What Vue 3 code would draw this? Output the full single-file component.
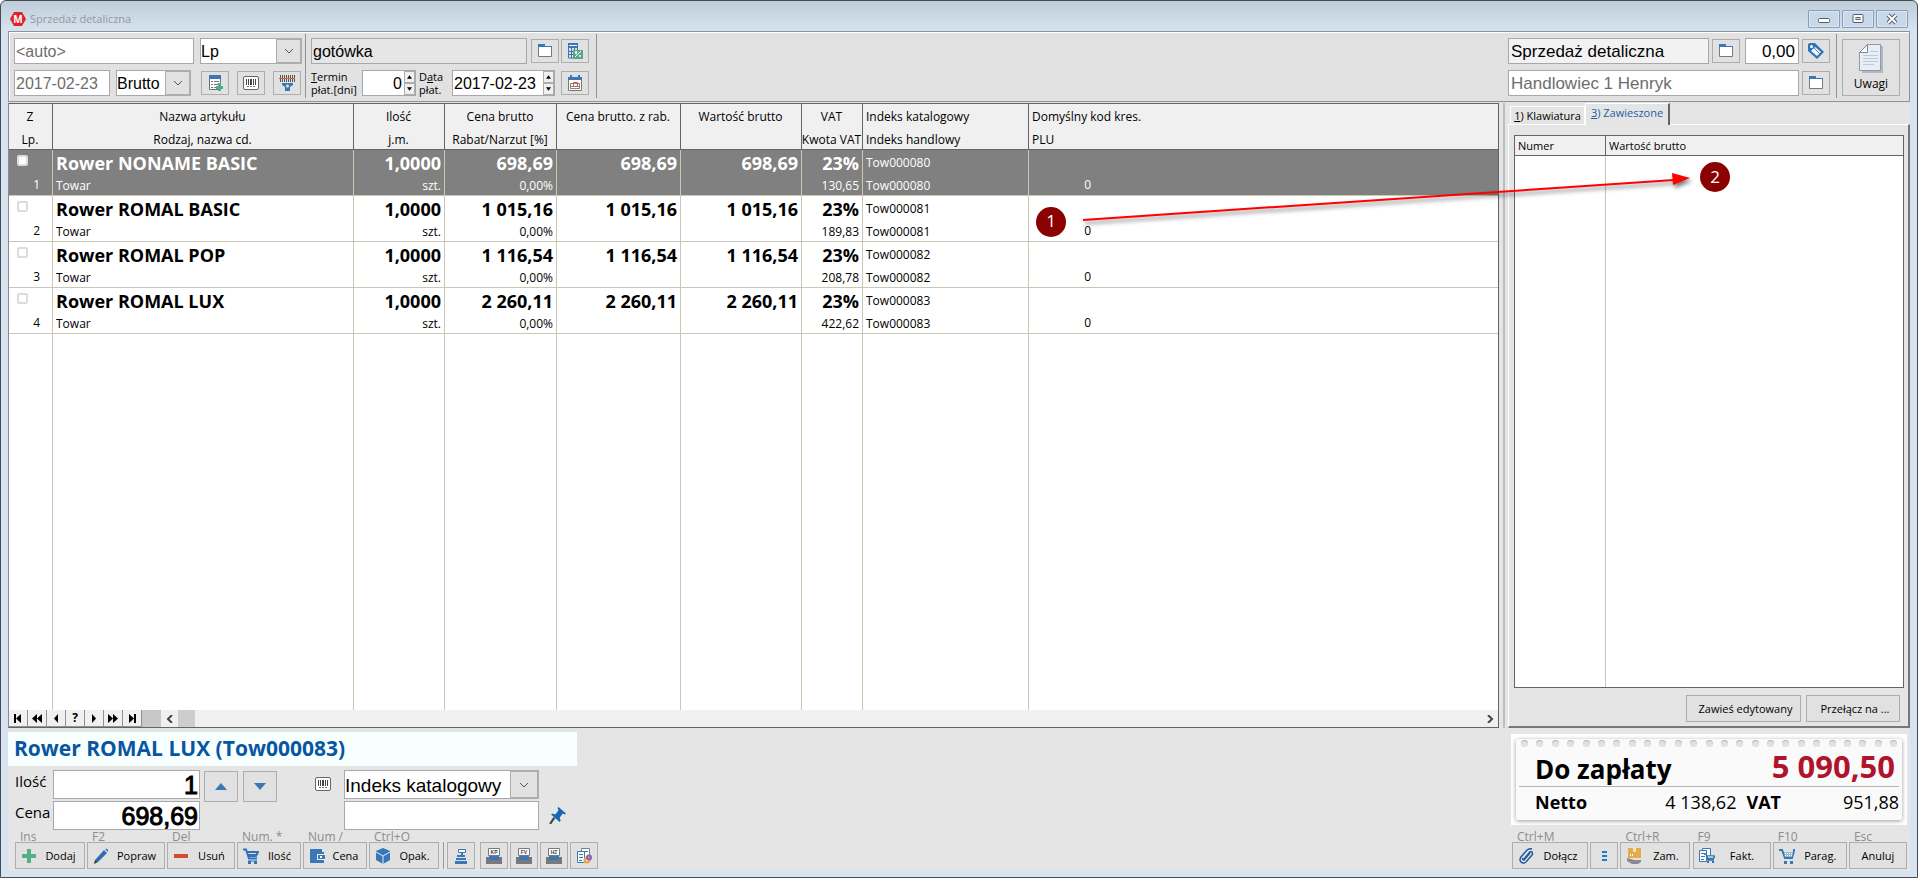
<script setup>
import { ref } from 'vue'

const columns = [
  { key: 'lp', top: 'Z', bottom: 'Lp.', align: 'mid' },
  { key: 'name', top: 'Nazwa artykułu', bottom: 'Rodzaj, nazwa cd.', align: 'mid' },
  { key: 'qty', top: 'Ilość', bottom: 'j.m.', align: 'mid' },
  { key: 'price', top: 'Cena brutto', bottom: 'Rabat/Narzut [%]', align: 'mid' },
  { key: 'disc', top: 'Cena brutto. z rab.', bottom: '', align: 'mid' },
  { key: 'value', top: 'Wartość brutto', bottom: '', align: 'mid' },
  { key: 'vat', top: 'VAT', bottom: 'Kwota VAT', align: 'mid' },
  { key: 'index', top: 'Indeks katalogowy', bottom: 'Indeks handlowy', align: 'start' },
  { key: 'code', top: 'Domyślny kod kres.', bottom: 'PLU', align: 'start' }
]

const rows = [
  { no: 1, name: 'Rower NONAME BASIC', price: '698,69', vat: '130,65', index: 'Tow000080' },
  { no: 2, name: 'Rower ROMAL BASIC', price: '1 015,16', vat: '189,83', index: 'Tow000081' },
  { no: 3, name: 'Rower ROMAL POP', price: '1 116,54', vat: '208,78', index: 'Tow000082' },
  { no: 4, name: 'Rower ROMAL LUX', price: '2 260,11', vat: '422,62', index: 'Tow000083' }
]

const selected = ref(1)
const docNumber = ref('<auto>')

const navGlyphs = [
  { name: 'Pierwszy', d: 'M3 3h2v9H3z M10 3v9L5 7.5z' },
  { name: 'Poprzednia strona', d: 'M7 3v9L2 7.5z M12 3v9L7 7.5z' },
  { name: 'Poprzedni', d: 'M9 3v9L5 7.5z' },
  { name: 'Szukaj', text: '?' },
  { name: 'Następny', d: 'M5 3v9l4-4.5z' },
  { name: 'Następna strona', d: 'M2 3v9l5-4.5z M7 3v9l5-4.5z' },
  { name: 'Ostatni', d: 'M4 3v9l5-4.5z M9 3h2v9H9z' }
]

const editActions = [
  { key: 'Ins', label: 'Dodaj', icon: 'plus', cls: 'w70' },
  { key: 'F2', label: 'Popraw', icon: 'pencil', cls: 'w78' },
  { key: 'Del', label: 'Usuń', icon: 'minus', cls: 'w68' },
  { key: 'Num. *', label: 'Ilość', icon: 'cart', cls: 'w64' },
  { key: 'Num /', label: 'Cena', icon: 'wallet', cls: 'w64' },
  { key: 'Ctrl+O', label: 'Opak.', icon: 'box', cls: 'w70' }
]

const printers = [
  { code: 'KP' },
  { code: 'FV' },
  { code: 'HZ' }
]

const docActions = [
  { key: 'Ctrl+M', label: 'Dołącz', icon: 'clip', cls: 'w76' },
  { key: '', label: '', icon: 'dots', cls: 'w28' },
  { key: 'Ctrl+R', label: 'Zam.', icon: 'parcel', cls: 'w70' },
  { key: 'F9', label: 'Fakt.', icon: 'invoice', cls: 'w78' },
  { key: 'F10', label: 'Parag.', icon: 'basket', cls: 'w74' },
  { key: 'Esc', label: 'Anuluj', icon: '', cls: 'w58' }
]
</script>

<template>
  <div class="window">
    <svg class="sprites" aria-hidden="true">
      <symbol id="i-folder" viewBox="0 0 16 16"><path fill="#fff" stroke="#77797c" d="M1.500 3.500h13v10h-13z" /><path fill="#3a78b5" d="M1 1h7v2h7v1H1z" /></symbol>
      <symbol id="i-calc" viewBox="0 0 16 16"><path fill="#3a78b5" d="M1 0h10v5H1z" /><path fill="#eef4fa" d="M2 2h8v1H2z" /><path fill="none" stroke="#3a78b5" d="M1.500 5v10h8M4.500 5v10M7.500 5v10M1 8.500h9M1 11.500h9M10.500 5v4" /><path fill="#58a884" d="M6 7h10v9H6z" /><path stroke="#fff" fill="none" d="M8 14l6-6M8.500 8.500h1v2h-1zM12.500 12.500h1v1h-1z" /></symbol>
      <symbol id="i-list" viewBox="0 0 16 16"><path fill="#fff" stroke="#6d7175" d="M2.500 1.500h11v13h-11z" /><path fill="#3a78b5" d="M2 0h12v4H2z" /><path stroke="#777" d="M4 6.500h2M7 6.500h5M4 9.500h2M7 9.500h4M4 12.500h2M7 12.500h2" /><path fill="#4fae83" d="M11 8h3v3h2v3h-2v2h-3v-2H9v-3h2z" /></symbol>
      <symbol id="i-barcode" viewBox="0 0 16 16"><rect x=".5" y="1.500" width="15" height="13" rx="1.500" fill="#fff" stroke="#666" /><path stroke="#444" d="M3.500 4v6M5.500 4v6M7.500 4v6M8.500 4v6M10.500 4v6M12.500 4v6" /><path stroke="#777" stroke-dasharray="2 1" d="M4 11.500h8" /></symbol>
      <symbol id="i-funnel" viewBox="0 0 16 16"><path stroke="#555" d="M1.500 0v7M3.500 0v7M5.500 0v7M7.500 0v7M9.500 0v7M11.500 0v7M13.500 0v7M15.500 0v7" /><path fill="#e05a45" d="M0 3h16v1H0z" /><path fill="#3a78b5" d="M3 8h11v2l-3 2v4H6v-4l-3-2z" /><circle cx="8.500" cy="11" r="1.500" fill="#d8e6f2" /></symbol>
      <symbol id="i-calendar" viewBox="0 0 16 16"><path fill="#fff" stroke="#777" d="M1.500 3.500h13v12h-13z" /><path fill="#3a78b5" d="M1 2h14v3H1zM3 0h2v3H3zM11 0h2v3h-2z" /><path fill="none" stroke="#888" d="M3 8.500h10M3 11.500h10M3.500 8v5M12.500 8v5M3 13.500h10" /><path fill="none" stroke="#e05a45" d="M6.500 7.500h4v4h-4z" /></symbol>
      <symbol id="i-tag" viewBox="0 0 18 18"><path fill="#2f74b8" d="M1 2l2-1h5l9 9-7 7-9-8z" /><path fill="#f7f9fb" d="M8 5l6 5-4 4-6-5z" /><path stroke="#4b82b8" fill="none" d="M7 6l6 6" /><circle cx="4.500" cy="4.500" r="1.500" fill="#fff" /></symbol>
      <symbol id="i-notes" viewBox="0 0 26 30"><path fill="#aeb9c4" d="M8 3h17v27H4v-4z" /><path fill="#e8eef4" stroke="#8d9aa8" d="M9.500 1.500h13v26h-21v-18z" /><path fill="#f8fafc" stroke="#75889c" d="M9.500 1.500v8h-8z" /><path stroke="#b9cbdc" d="M12 8.500h8M5 12.500h15M5 15.500h15M5 18.500h15M5 21.500h11" /></symbol>
      <symbol id="i-plus" viewBox="0 0 16 16"><path fill="#55b089" d="M6 1h4v5h5v4h-5v5H6v-5H1V6h5z" /></symbol>
      <symbol id="i-minus" viewBox="0 0 16 16"><path fill="#cf4b33" d="M1 6h14v4H1z" /></symbol>
      <symbol id="i-pencil" viewBox="0 0 16 16"><path fill="#2e6fb4" d="M11 2l3 3-9 9-3-2zM12 1q2-1 3 1v2z" /><path fill="#333" d="M2 12l3 2-4 2z" /></symbol>
      <symbol id="i-cart" viewBox="0 0 16 16"><path fill="none" stroke="#2f74b8" stroke-width="2" d="M0 1.500h3l3 9h8M4 4h11l-2 4H5" /><path stroke="#2f74b8" d="M5 6.500h9M5 13h9" /><path fill="#2f74b8" d="M5 13h3v3H5zM11 13h3v3h-3z" /></symbol>
      <symbol id="i-wallet" viewBox="0 0 16 16"><path fill="#3a78b5" d="M1 1h12v3h2v11H1z" /><path fill="#e9eff6" d="M8 6h8v6H8z" /><path fill="#3a78b5" d="M9 7h7v4H9z" /><path fill="#fff" d="M11 8h2v2h-2z" /></symbol>
      <symbol id="i-box" viewBox="0 0 16 16"><path fill="#3577b8" d="M8 0l7 3v9l-7 4-7-4V3z" /><path fill="none" stroke="#e4edf6" d="M1 4l7 4 7-4M8 8v8" /></symbol>
      <symbol id="i-register" viewBox="0 0 16 16"><path fill="#fff" stroke="#3a78b5" d="M5.500 1.500h7v3h-7z" /><path fill="#3a78b5" d="M8 4h2v3H8zM4 7h8v2H4zM3 10h10v2H3zM2 13h12v3H2z" /></symbol>
      <symbol id="i-report" viewBox="0 0 16 16"><path fill="#fff" stroke="#6f8296" d="M5.500 .5h8v9h-8z" /><path fill="#fff" stroke="#3a78b5" d="M1.500 3.500h7v11h-7z" /><path stroke="#3a78b5" d="M3 6.500h4M3 9.500h4M3 12.500h3M7 3.500h5" /><circle cx="11" cy="12" r="2.500" fill="none" stroke="#f2a23c" stroke-width="2" /><circle cx="13" cy="9.500" r="2" fill="none" stroke="#8a63b8" stroke-width="2" /></symbol>
      <symbol id="i-pin" viewBox="0 0 16 16"><path fill="#1565b8" d="M9 0l7 6-1 1-2-1-3 4 1 3-1 1-8-7 1-1 3 1 3-4-1-2z" /><path stroke="#444" stroke-width="2" d="M5 10l-4 6" /></symbol>
      <symbol id="i-clip" viewBox="0 0 16 16"><path fill="none" stroke="#1d5c9f" stroke-width="1.500" d="M6 11l5-6q1-2 3-1 1 2 0 3l-6 7q-3 2-5 0-2-2 0-5l6-7q3-2 5-1M5 10q-1 2 1 2l6-7" /></symbol>
      <symbol id="i-dots" viewBox="0 0 16 16"><path fill="#1d7fc0" d="M6 3h5v2H6zM6 7h5v2H6zM6 11h5v2H6z" /></symbol>
      <symbol id="i-parcel" viewBox="0 0 16 16"><path fill="#e3ab4c" d="M2 0h13v10H2z" /><path fill="#f7e3b8" d="M7 0h3v4H7z" /><path fill="#fff" d="M4 6h1v2H4zM6 6h1v2H6z" /><path fill="#8b8b8d" d="M1 10l4 1 3 1h7v2l-3 2H6l-5-3z" /></symbol>
      <symbol id="i-invoice" viewBox="0 0 16 16"><path fill="#fff" stroke="#3a78b5" d="M3.500 .5h8v10h-8z" /><path fill="#fff" stroke="#3a78b5" d="M.5 2.500h7v11h-7z" /><path stroke="#3a78b5" d="M2 5.500h4M2 8.500h4M2 11.500h3" /><path fill="none" stroke="#2f74b8" stroke-width="1.500" d="M5 6h2l2 6h6M8 8h8l-2 3H9" /><path fill="#9fd0b4" d="M9 8h5v2H9z" /><path fill="#2f74b8" d="M8 13h2v2H8zM13 13h2v2h-2z" /></symbol>
      <symbol id="i-basket" viewBox="0 0 16 16"><path fill="none" stroke="#3a78b5" stroke-width="2" d="M0 2h3l3 8h8M14 2h2M4 4l2 6h7l2-7" /><path fill="#8ebfd0" d="M5 4h9l-1 5H6z" /><path stroke="#fff" stroke-dasharray="1 1" d="M6 5.500h8M6 7.500h7" /><path fill="#3a78b5" d="M5 13h3v3H5zM11 13h3v3h-3z" /></symbol>
    </svg>

    <header class="titlebar">
      <svg class="logo" viewBox="0 0 16 16" aria-hidden="true">
        <path fill="#e0222c" d="M4 1h8l4 7-4 7H4L0 8z" />
        <text x="8" y="12" text-anchor="middle">M</text>
      </svg>
      <h1>Sprzedaż detaliczna</h1>
      <div class="caption">
        <button type="button" aria-label="Minimalizuj"><svg viewBox="0 0 12 12"><rect x=".5" y="5.500" width="11" height="4" rx="1" fill="#fff" stroke="#555b68" /></svg></button>
        <button type="button" aria-label="Maksymalizuj"><svg viewBox="0 0 12 12"><rect x="1" y="1.500" width="10" height="8" rx="1" fill="#fff" stroke="#555b68" /><rect x="4" y="4.500" width="4" height="2" fill="#d5e0ee" stroke="#555b68" /></svg></button>
        <button type="button" aria-label="Zamknij"><svg viewBox="0 0 12 12"><path stroke="#555b68" stroke-width="4" d="M2 2l8 8M10 2l-8 8" /><path stroke="#fff" stroke-width="2" d="M2 2l8 8M10 2l-8 8" /></svg></button>
      </div>
    </header>

    <div class="toolbar">
      <div class="group">
        <div class="line">
          <input class="field muted w180" v-model="docNumber" aria-label="Numer dokumentu">
          <div class="combo w102"><select aria-label="Sortowanie"><option>Lp</option></select><span class="arrow"><svg viewBox="0 0 10 6"><path d="M1 1l4 4 4-4" /></svg></span></div>
        </div>
        <div class="line">
          <input class="field muted w96" value="2017-02-23" aria-label="Data dokumentu">
          <div class="combo w75"><select aria-label="Rodzaj ceny"><option>Brutto</option></select><span class="arrow"><svg viewBox="0 0 10 6"><path d="M1 1l4 4 4-4" /></svg></span></div>
          <div class="tools">
            <button class="tool" type="button" aria-label="Dodaj pozycje"><svg><use href="#i-list" /></svg></button>
            <button class="tool" type="button" aria-label="Kod kreskowy"><svg><use href="#i-barcode" /></svg></button>
            <button class="tool" type="button" aria-label="Filtr kodów"><svg><use href="#i-funnel" /></svg></button>
          </div>
        </div>
      </div>
      <div class="group">
        <div class="line">
          <input class="field gray w216" value="gotówka" aria-label="Forma płatności">
          <div class="pair">
            <button class="tool" type="button" aria-label="Wybierz formę płatności"><svg><use href="#i-folder" /></svg></button>
            <button class="tool" type="button" aria-label="Rabat"><svg><use href="#i-calc" /></svg></button>
          </div>
        </div>
        <div class="line terms">
          <label class="tiny w48" for="term"><u>T</u>ermin<br>płat.[dni]</label>
          <div class="spin w54"><input id="term" class="num" value="0"><span class="steps"><button type="button" aria-label="Więcej dni"><svg viewBox="0 0 6 4"><path d="M0 4l3-4 3 4z" /></svg></button><button type="button" aria-label="Mniej dni"><svg viewBox="0 0 6 4"><path d="M0 0l3 4 3-4z" /></svg></button></span></div>
          <label class="tiny w30" for="due">D<u>a</u>ta<br>płat.</label>
          <div class="spin w103"><input id="due" value="2017-02-23"><span class="steps"><button type="button" aria-label="Późniejsza data"><svg viewBox="0 0 6 4"><path d="M0 4l3-4 3 4z" /></svg></button><button type="button" aria-label="Wcześniejsza data"><svg viewBox="0 0 6 4"><path d="M0 0l3 4 3-4z" /></svg></button></span></div>
          <button class="tool push" type="button" aria-label="Kalendarz"><svg><use href="#i-calendar" /></svg></button>
        </div>
      </div>
      <div class="group right">
        <div class="line">
          <input class="field light w201" value="Sprzedaż detaliczna" aria-label="Kontrahent">
          <button class="tool" type="button" aria-label="Wybierz kontrahenta"><svg><use href="#i-folder" /></svg></button>
          <input class="field num w54" value="0,00" aria-label="Rabat kwotowy">
          <button class="tool" type="button" aria-label="Cennik"><svg class="big"><use href="#i-tag" /></svg></button>
        </div>
        <div class="line">
          <input class="field muted grow" value="Handlowiec 1 Henryk" aria-label="Handlowiec">
          <button class="tool" type="button" aria-label="Wybierz handlowca"><svg><use href="#i-folder" /></svg></button>
        </div>
      </div>
      <button class="notes" type="button"><svg><use href="#i-notes" /></svg>Uwagi</button>
    </div>

    <main class="work">
      <section class="items">
        <div class="sheet">
          <table class="lines">
            <colgroup><col v-for="c in columns" :key="c.key" :class="'c-' + c.key"></colgroup>
            <thead>
              <tr>
                <th v-for="c in columns" :key="c.key" :class="c.align">
                  <div class="two"><span>{{ c.top }}</span><span>{{ c.bottom }}</span></div>
                </th>
              </tr>
            </thead>
            <tbody>
              <tr v-for="r in rows" :key="r.no" :class="{ sel: r.no === selected }" @click="selected = r.no">
                <td><div class="cell mark"><input type="checkbox" :aria-label="'Zaznacz ' + r.name"><span>{{ r.no }}</span></div></td>
                <td><div class="cell"><b>{{ r.name }}</b><span>Towar</span></div></td>
                <td><div class="cell end"><b>1,0000</b><span>szt.</span></div></td>
                <td><div class="cell end"><b>{{ r.price }}</b><span>0,00%</span></div></td>
                <td><div class="cell end"><b>{{ r.price }}</b></div></td>
                <td><div class="cell end"><b>{{ r.price }}</b></div></td>
                <td><div class="cell end"><b>23%</b><span>{{ r.vat }}</span></div></td>
                <td><div class="cell"><span>{{ r.index }}</span><span>{{ r.index }}</span></div></td>
                <td><div class="cell plu"><span></span><span>0</span></div></td>
              </tr>
              <tr class="rest"><td v-for="c in columns" :key="c.key"></td></tr>
            </tbody>
          </table>
        </div>
        <div class="navigator">
          <button v-for="n in navGlyphs" :key="n.name" type="button" :aria-label="n.name">
            <svg v-if="n.d" viewBox="0 0 14 15"><path :d="n.d" /></svg>
            <template v-else>{{ n.text }}</template>
          </button>
          <span class="nav-end"></span>
          <button class="scroll" type="button" aria-label="Przewiń w lewo"><svg viewBox="0 0 8 8"><path d="M6 0L2 4l4 4" /></svg></button>
          <span class="thumb"></span>
          <button class="scroll last" type="button" aria-label="Przewiń w prawo"><svg viewBox="0 0 8 8"><path d="M2 0l4 4-4 4" /></svg></button>
        </div>
      </section>
      <div class="splitter"></div>
      <aside class="side">
        <nav class="tabs">
          <button class="tab" type="button"><u>1</u>) Klawiatura</button>
          <button class="tab on" type="button"><u>3</u>) Zawieszone</button>
        </nav>
        <div class="pane">
          <table class="held">
            <thead><tr><th class="c-numer">Numer</th><th>Wartość brutto</th></tr></thead>
            <tbody><tr><td></td><td></td></tr></tbody>
          </table>
          <div class="pane-actions">
            <button type="button" class="flat w115">Zawieś edytowany</button>
            <button type="button" class="flat w94">Przełącz na ...</button>
          </div>
        </div>
      </aside>
    </main>

    <footer class="bottom">
      <section class="editor">
        <h2>Rower ROMAL LUX (Tow000083)</h2>
        <div class="entry">
          <div class="values">
            <label for="qty">Ilość</label><input id="qty" class="field num strong" value="1">
            <label for="price">Cena</label><input id="price" class="field num strong" value="698,69">
          </div>
          <div class="arrows">
            <button type="button" aria-label="Zwiększ"><svg viewBox="0 0 12 7"><path d="M0 7l6-7 6 7z" /></svg></button>
            <button type="button" aria-label="Zmniejsz"><svg viewBox="0 0 12 7"><path d="M0 0l6 7 6-7z" /></svg></button>
          </div>
          <svg class="scan" aria-hidden="true"><use href="#i-barcode" /></svg>
          <div class="search">
            <div class="combo tall"><select aria-label="Szukaj według"><option>Indeks katalogowy</option></select><span class="arrow"><svg viewBox="0 0 10 6"><path d="M1 1l4 4 4-4" /></svg></span></div>
            <input class="field tall" value="" aria-label="Szukana wartość">
          </div>
          <svg class="pin" aria-hidden="true"><use href="#i-pin" /></svg>
        </div>
        <div class="actions">
          <div v-for="a in editActions" :key="a.label" class="action" :class="a.cls">
            <span class="key">{{ a.key }}</span>
            <button type="button" class="flat"><svg><use :href="'#i-' + a.icon" /></svg><span>{{ a.label }}</span></button>
          </div>
          <div class="extra">
            <button class="tool first" type="button" aria-label="Kasa"><svg><use href="#i-register" /></svg></button>
            <button v-for="p in printers" :key="p.code" class="tool" type="button" :aria-label="'Drukuj ' + p.code">
              <svg class="printer" viewBox="0 0 16 16">
                <path fill="#77797c" d="M0 9h3v3h10V9h3v7H0z" />
                <path fill="#3a78b5" d="M3 8h10v4H3z" />
                <path fill="#fff" stroke="#77797c" d="M2.500 .5h11v7h-11z" />
                <text x="8" y="6" text-anchor="middle">{{ p.code }}</text>
              </svg>
            </button>
            <button class="tool" type="button" aria-label="Raport"><svg><use href="#i-report" /></svg></button>
          </div>
        </div>
      </section>
      <section class="summary">
        <div class="receipt">
          <div class="paper">
            <div class="holes"><i v-for="n in 25" :key="n"></i></div>
            <div class="due"><strong>Do zapłaty</strong><span>5 090,50</span></div>
            <div class="parts"><strong>Netto</strong><span class="net">4 138,62</span><strong>VAT</strong><span class="tax">951,88</span></div>
          </div>
        </div>
        <div class="actions closing">
          <div v-for="a in docActions" :key="a.key + a.label" class="action" :class="a.cls">
            <span class="key">{{ a.key }}</span>
            <button type="button" class="flat" :class="{ solo: !a.label || !a.icon }" :aria-label="a.label || 'Więcej'"><svg v-if="a.icon"><use :href="'#i-' + a.icon" /></svg><span v-if="a.label">{{ a.label }}</span></button>
          </div>
        </div>
      </section>
    </footer>

    <svg class="callout" viewBox="0 0 694 77" aria-hidden="true">
      <g class="shade"><path class="shaft" d="M47 59L638 19" /><path class="head" d="M636 12l18 5-17 7z" /></g>
      <circle cx="15" cy="61" r="15" /><text x="15" y="66" text-anchor="middle">1</text>
      <circle cx="679" cy="16" r="15" /><text x="679" y="22" text-anchor="middle">2</text>
    </svg>
  </div>
</template>

<style>
body { background: #fff; }
</style>

<style scoped>
* { box-sizing: border-box; }
.window {
  position: relative; display: flex; flex-direction: column; height: 100vh; min-height: 600px;
  padding: 0 7px 6px; border: 1px solid #4a4a50; border-radius: 6px 6px 0 0;
  background: linear-gradient(#bfcddb, #d6e4f2 30px);
  font: 12px/16px "Open Sans", "Noto Sans", sans-serif; color: #000;
}
.sprites { position: absolute; width: 0; height: 0; }
button, input, select { font: inherit; color: inherit; margin: 0; border-radius: 0; outline: none; }
button { padding: 0; display: flex; align-items: center; justify-content: center; background: #e1e1e1; border: 1px solid #adadad; }
svg { display: block; flex: none; }

.titlebar { display: flex; align-items: center; height: 30px; flex: none; padding: 6px 2px 0; }
.logo { width: 16px; height: 16px; }
.logo text { font: bold 10px "Open Sans", sans-serif; fill: #fff; }
h1 { margin: 0 auto 0 4px; font-size: 11px; font-weight: 400; color: #94979b; }
.caption { display: flex; gap: 2px; }
.caption button { width: 32px; height: 18px; background: #c9d8e8; border: 1px solid #8a9cb4; border-radius: 1px; box-shadow: inset 0 0 0 1px #dce7f3; }
.caption svg { width: 12px; height: 12px; }

.toolbar { display: flex; flex: none; height: 71px; border: 1px solid #929292; box-shadow: inset 1px 1px #fff; background: #e1e1e1; padding: 2px 9px 3px 5px; }
.group { display: flex; flex-direction: column; gap: 6px; padding: 4px 3px 0 0; border-right: 1px solid #929292; margin-right: 5px; }
.group + .group { padding-right: 7px; }
.group.right { margin-left: auto; width: 329px; padding-right: 6px; }
.line { display: flex; align-items: center; gap: 6px; height: 26px; }
.right .line { gap: 3px; }
.right .tool + .field { margin-left: 2px; }
.tools { display: flex; gap: 8px; margin: 0 1px 0 4px; }
.pair { display: flex; gap: 2px; margin-left: -2px; }
.terms { gap: 3px; }
.push { margin-left: auto; }
.field { height: 26px; padding: 1px 1px 0; background: #fff; border: 1px solid #a7a7ad; font: 16px/24px "Liberation Sans", Arial, sans-serif; min-width: 0; }
.field.gray { background: #e6e6e6; }
.field.light { background: #f2f2f2; }
.muted { color: #6d6d6d; }
.num { text-align: right; }
.grow { flex: 1; }
.right .field { padding: 1px 3px 0 2px; font-size: 17px; }
.tool { width: 28px; height: 24px; flex: none; }
.tool svg { width: 16px; height: 16px; }
.tool svg.big { width: 18px; height: 18px; }
.combo { display: grid; height: 26px; }
.combo select { grid-area: 1 / 1; appearance: none; width: 100%; height: 100%; background: #fff; border: 1px solid #a7a7ad; padding: 1px 0 0; font: 16px "Liberation Sans", Arial, sans-serif; }
.combo .arrow { grid-area: 1 / 1; justify-self: end; width: 26px; display: grid; place-items: center; background: #e1e1e1; border: 2px solid #adadad; border-left-width: 1px; pointer-events: none; }
.arrow svg { width: 10px; height: 6px; fill: none; stroke: #555; }
.tiny { font-size: 11px; line-height: 13px; white-space: nowrap; }
.spin { display: flex; height: 26px; background: #fff; border: 1px solid #a7a7ad; }
.spin input { flex: 1; min-width: 0; border: 0; padding: 1px 2px 0 1px; background: none; font: 16px "Liberation Sans", Arial, sans-serif; }
.steps { display: flex; flex-direction: column; width: 11px; }
.steps button { flex: 1; background: #f0f0f0; }
.steps svg { width: 5px; height: 4px; }
.notes { width: 58px; height: 57px; margin-top: 5px; flex-direction: column; gap: 3px; }
.notes svg { width: 26px; height: 30px; }

.work { display: flex; flex: 1; min-height: 0; margin-top: 1px; background: #e5e5e5; }
.items { flex: 1; min-width: 0; display: flex; flex-direction: column; border: 1px solid #646464; border-left-color: #8a8a8a; background: #fff; }
.sheet { flex: 1; min-height: 0; }
table { border-collapse: separate; border-spacing: 0; table-layout: fixed; width: 100%; height: 100%; }
th, td { padding: 0; font-weight: 400; text-align: left; }
.c-lp { width: 44px; }
.c-name { width: 301px; }
.c-qty { width: 91px; }
.c-price { width: 112px; }
.c-disc { width: 124px; }
.c-value { width: 121px; }
.c-vat { width: 61px; }
.c-index { width: 166px; }
.lines th { height: 46px; background: #f0f0f0; border-right: 1px solid #646464; border-bottom: 1px solid #646464; }
.lines td { border-right: 1px solid #c8c8b4; border-bottom: 1px solid #c8c8b4; height: 46px; }
.lines th:last-child, .lines td:last-child { border-right: 0; }
.lines .rest td { height: auto; border-bottom: 0; }
.two { display: flex; flex-direction: column; height: 45px; padding-top: 1px; overflow: hidden; white-space: nowrap; }
.two span { height: 23px; line-height: 23px; }
.mid .two { align-items: center; padding-right: 1px; }
.start .two { padding-left: 3px; }
.cell { display: flex; flex-direction: column; height: 45px; padding: 0 3px; white-space: nowrap; }
.cell > * { height: 20px; line-height: 20px; }
.cell > :first-child { height: 26px; line-height: 26px; }
.cell b { font-size: 18px; }
.end { align-items: flex-end; }
.plu { width: 65px; align-items: flex-end; }
.mark { padding: 5px 12px 0 8px; justify-content: space-between; }
.mark span { text-align: right; }
.cell.mark input { appearance: none; width: 11px; height: 11px; background: #fff; border: 2px solid #dcdcdc; border-radius: 2px; }
.sel { background: #808080; color: #fff; }
.navigator { display: flex; height: 17px; background: #f0f0f0; }
.navigator button { width: 19px; height: 17px; border: 0; border-right: 1px solid #929292; border-bottom: 1px solid #929292; background: #f0f0f0; font-weight: 700; line-height: 14px; }
.navigator svg { width: 14px; height: 15px; }
.nav-end { width: 19px; background: #c8c8c8; }
.navigator .scroll { width: 17px; border: 0; }
.navigator .scroll svg { width: 8px; height: 8px; fill: none; stroke: #444; stroke-width: 2; }
.thumb { width: 17px; background: #cdcdcd; }
.last { margin-left: auto; }
.splitter { width: 9px; background: linear-gradient(90deg, #e5e5e5 4px, #bdbdbd 4px, #bdbdbd 6px, #e5e5e5 6px); }

.side { width: 402px; display: flex; flex-direction: column; }
.tabs { display: flex; align-items: flex-end; height: 21px; padding-left: 2px; }
.tab { height: 18px; width: 75px; border: 0; background: #e5e5e5; border-top: 1px solid #fff; border-left: 1px solid #fff; border-right: 1px solid #fff; font-size: 11px; white-space: nowrap; }
.tab.on { height: 22px; width: 85px; margin-bottom: -1px; padding-bottom: 3px; color: #1a5fa5; border-right: 2px solid #646464; z-index: 1; }
.pane { flex: 1; min-height: 0; display: flex; flex-direction: column; padding: 10px 4px 4px 5px; border: 1px solid #fff; border-right: 2px solid #777; border-bottom: 2px solid #777; }
.held { flex: 1; height: auto; border: 1px solid #646464; background: #fff; font-size: 11px; display: table; }
.held thead { height: 20px; }
.held th { height: 20px; background: #f0f0f0; padding: 0 3px; border-bottom: 1px solid #646464; }
.held th:first-child { border-right: 1px solid #646464; }
.held td:first-child { border-right: 1px solid #c8c8b4; }
.c-numer { width: 91px; }
.pane-actions { display: flex; justify-content: flex-end; gap: 5px; padding-top: 7px; padding-right: 4px; }
.flat { height: 27px; }
.pane-actions .flat { padding-left: 4px; white-space: nowrap; font-size: 11px; }

.bottom { display: flex; justify-content: space-between; flex: none; height: 143px; background: #e5e5e5; padding-top: 4px; }
.editor { flex: 1; }
h2 { margin: 0; width: 569px; height: 34px; padding-left: 6px; font-size: 21px; line-height: 32px; color: #0a559f; background: #f8ffff; }
.entry { display: flex; align-items: flex-start; padding: 4px 0 0 7px; }
.values { display: grid; grid-template-columns: 38px 147px; row-gap: 2px; }
.values label { font-size: 15px; line-height: 22px; }
.field.strong { height: 29px; font: 500 25px/27px "Liberation Sans", Arial, sans-serif; -webkit-text-stroke: 1px #000; }
.arrows { display: flex; gap: 5px; margin: 1px 0 0 4px; }
.arrows button { width: 34px; height: 31px; }
.arrows svg { width: 12px; height: 7px; fill: #3a78b5; }
.scan { width: 16px; height: 16px; margin: 6px 13px 0 38px; }
.search { display: flex; flex-direction: column; gap: 2px; width: 195px; }
.combo.tall, .field.tall { height: 29px; }
.combo.tall select { font-size: 19px; }
.combo.tall .arrow { width: 29px; }
.pin { width: 17px; height: 17px; margin: 37px 0 0 10px; }
.actions { display: flex; gap: 2px; padding-left: 7px; }
.action { display: flex; flex-direction: column; }
.key { height: 12px; padding-left: 5px; line-height: 13px; color: #8c8c8c; white-space: nowrap; }
.action .flat { width: 100%; padding-left: 5px; font-size: 11px; }
.action .flat svg { width: 16px; height: 16px; }
.action .flat span { flex: 1; text-align: center; }
.action .flat.solo { padding: 0; }
.extra { display: flex; align-items: flex-end; gap: 2px; margin-left: 2px; padding-left: 4px; background: linear-gradient(#999, #999) 0 12px / 1px 28px no-repeat; }
.extra .tool { height: 27px; }
.extra .first { margin-right: 3px; }
.printer text { font: bold 5px "Liberation Sans", Arial, sans-serif; fill: #444; }

.summary { width: 402px; padding-top: 2px; }
.receipt { margin: 0 3px; height: 91px; padding: 5px; background: #fff; }
.paper { height: 81px; background: #fafafa; box-shadow: 0 1px 4px #999; border-radius: 2px; padding: 1px 3px 0; }
.holes { display: flex; justify-content: space-between; padding: 0 2px; height: 8px; }
.holes i { width: 7px; height: 7px; border-radius: 50%; background: #e2e2e2; box-shadow: inset 0 1px 1px #b5b5b5; }
.due { display: flex; justify-content: space-between; height: 39px; padding: 0 4px 0 16px; border-bottom: 1px solid #b4b4b4; }
.due strong { font-size: 26px; line-height: 42px; }
.due span { font-size: 31px; line-height: 36px; font-weight: 700; color: #b0142c; }
.parts { display: flex; height: 30px; padding-left: 16px; font-size: 18px; line-height: 30px; }
.net { margin-left: auto; }
.net + strong { margin-left: 10px; }
.tax { width: 124px; text-align: right; }
.parts .net + strong + .tax { margin-left: -6px; }
.closing { padding: 5px 3px 0 4px; justify-content: space-between; }

.w28 { width: 28px; } .w30 { width: 30px; } .w48 { width: 48px; } .w54 { width: 54px; } .w58 { width: 58px; }
.w64 { width: 64px; } .w68 { width: 68px; } .w70 { width: 70px; } .w74 { width: 74px; } .w75 { width: 75px; }
.w76 { width: 76px; } .w78 { width: 78px; } .w94 { width: 94px; } .w96 { width: 96px; } .w102 { width: 102px; }
.w103 { width: 103px; } .w115 { width: 115px; } .w180 { width: 180px; } .w201 { width: 201px; } .w216 { width: 216px; }

.callout { position: absolute; left: 1035px; top: 160px; width: 694px; height: 77px; pointer-events: none; }
.callout circle { fill: #8b0000; }
.callout text { font: 17px "Open Sans", sans-serif; fill: #fff; }
.shade { filter: drop-shadow(2px 3px 2px #0008); }
.shaft { stroke: #f00; stroke-width: 2; }
.head { fill: #f00; }
</style>
